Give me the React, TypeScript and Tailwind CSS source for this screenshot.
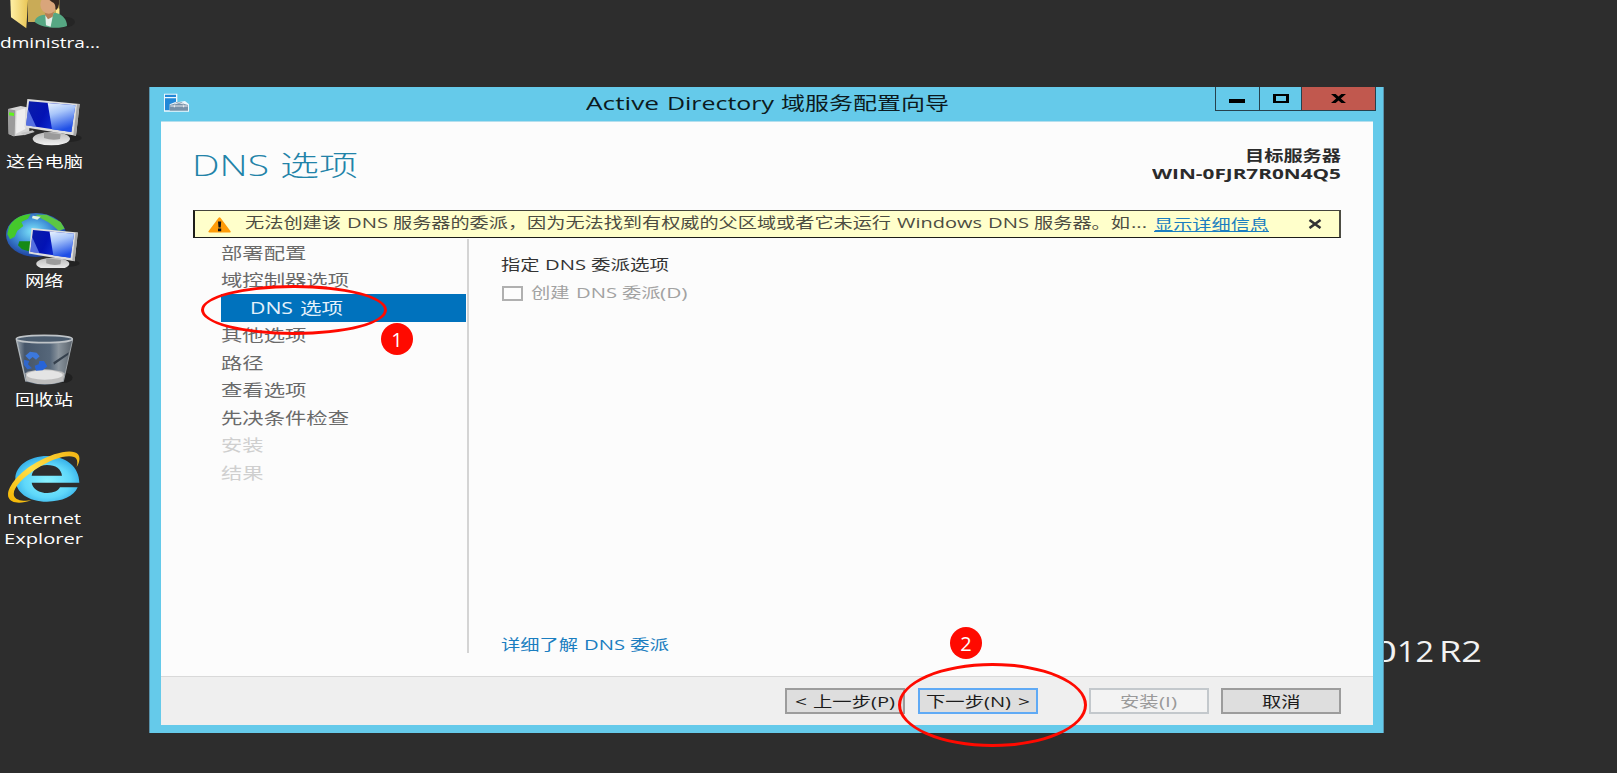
import { useLayoutEffect, useRef, useState } from "react";
import type { ReactNode } from "react";

type Segment = [text: string, width: number, gap?: number];

/** Text stretched horizontally so that it fills the given width. */
function Fit({ text, width, gap = 0 }: { text: string; width: number; gap?: number }) {
  const ref = useRef<HTMLSpanElement>(null);
  const [scale, setScale] = useState(1);
  useLayoutEffect(() => {
    if (ref.current) {
      const natural = parseFloat(getComputedStyle(ref.current).width);
      if (natural > 0) setScale(width / natural);
    }
  }, [text, width]);
  return (
    <span className="block shrink-0 whitespace-nowrap text-left" style={{ width, marginLeft: gap }}>
      <span ref={ref} className="inline-block origin-left" style={{ transform: `scaleX(${scale})` }}>
        {text}
      </span>
    </span>
  );
}

function Line({ parts, className = "" }: { parts: Segment[]; className?: string }) {
  return (
    <span className={`flex items-center ${className}`}>
      {parts.map(([text, width, gap], i) => (
        <Fit key={i} text={text} width={width} gap={gap} />
      ))}
    </span>
  );
}

function Monitor() {
  return (
    <>
      <defs>
        <linearGradient id="blueScreen" x1="0" y1="0" x2="1" y2="0.3">
          <stop offset="0" stopColor="#0a1fa8" />
          <stop offset="0.45" stopColor="#0312b4" />
          <stop offset="1" stopColor="#1740e8" />
        </linearGradient>
        <linearGradient id="glare" x1="0" y1="0" x2="0.3" y2="1">
          <stop offset="0" stopColor="#e8f2ff" />
          <stop offset="0.4" stopColor="#a9c6fa" />
          <stop offset="1" stopColor="#1f4fe6" />
        </linearGradient>
        <linearGradient id="silver" x1="0" y1="0" x2="0" y2="1">
          <stop offset="0" stopColor="#b9b9b9" />
          <stop offset="1" stopColor="#f2f2f2" />
        </linearGradient>
      </defs>
      <ellipse cx="205" cy="413" rx="40" ry="12" fill="#222" />
      <ellipse cx="154" cy="415" rx="56" ry="20" fill="url(#silver)" />
      <path d="M132 396 L182 402 L180 416 Q156 422 132 413Z" fill="#9b9b9b" />
      <path d="M82 296 L239 311 L228 406 L73 381Z" fill="#dedede" />
      <path d="M231 312 L239 311 L228 406 L220 404Z" fill="#a7a7a7" />
      <path d="M87 303 L226 315 L214 395 L78 375Z" fill="url(#blueScreen)" />
      <path d="M143 308 L226 315 L214 395 L156 387Z" fill="url(#glare)" />
      <path d="M84 326 L109 380 L78 375Z" fill="#6f8cf0" opacity=".75" />
    </>
  );
}

function AdminIcon() {
  return (
    <svg width="88" height="30" viewBox="0 0 264 90" className="shrink-0">
      <defs>
        <linearGradient id="folder" x1="0" y1="0" x2="1" y2="0">
          <stop offset="0" stopColor="#fff0a6" />
          <stop offset="1" stopColor="#e9c657" />
        </linearGradient>
      </defs>
      <ellipse cx="195" cy="66" rx="30" ry="16" fill="#252525" />
      <path d="M84 0H178V44L130 66L84 66Z" fill="#c9ab57" />
      <path d="M168 22L178 26V42H168Z" fill="#fbe58c" />
      <path d="M31 0H84L79 85L33 52Z" fill="url(#folder)" />
      <path d="M104 66C106 48 124 44 140 44L166 38C188 42 202 60 201 78C180 87 130 86 104 66Z" fill="#56a783" />
      <path d="M136 46L160 40L152 80L138 76Z" fill="#e5efe9" />
      <path d="M134 34H162L158 50L144 58L136 46Z" fill="#b67f55" />
      <ellipse cx="146" cy="14" rx="25" ry="27" fill="#d9a57b" />
      <path d="M146 -2H177V12Q172 34 166 28Q168 10 156 6Z" fill="#33261f" />
    </svg>
  );
}

function ComputerIcon() {
  return (
    <svg width="88" height="52" viewBox="0 284 264 156" className="shrink-0">
      <path d="M24 326L62 317L88 322V398L72 404L40 408L26 400Z" fill="#d5d5d5" />
      <path d="M24 326L46 330L44 408L26 402Z" fill="#9b9b9b" />
      <path d="M27 336L42 338V347L27 345Z" fill="#5ff51c" />
      <path d="M50 332L76 324V386L48 400Z" fill="#eee" />
      <path d="M62 398L98 390L104 395L72 405Z" fill="#c4c4c4" />
      <Monitor />
    </svg>
  );
}

function NetworkIcon() {
  return (
    <svg width="88" height="56" viewBox="0 634 264 168" className="shrink-0">
      <defs>
        <radialGradient id="globe" cx="0.45" cy="0.42" r="0.6">
          <stop offset="0" stopColor="#7fe6fb" />
          <stop offset="0.5" stopColor="#3f8ed6" />
          <stop offset="1" stopColor="#1c3a9a" />
        </radialGradient>
      </defs>
      <ellipse cx="108" cy="703" rx="90" ry="66" fill="url(#globe)" />
      <path d="M27 678C40 655 62 642 92 640L84 654L64 664L70 676L52 690L44 708L30 716L22 700Z" fill="#45c92c" />
      <path d="M106 642L140 642L182 664L194 684L176 690L160 676L144 664L128 656Z" fill="#5cc744" />
      <path d="M98 645L122 648L112 657L96 653Z" fill="#dff5e2" />
      <path d="M58 722L92 722L96 738L86 752L66 746L54 734Z" fill="#168a17" />
      <g transform="translate(22 414) scale(.885 .905)">
        <Monitor />
      </g>
    </svg>
  );
}

function RecycleIcon() {
  return (
    <svg width="88" height="54" viewBox="0 128 264 162" className="shrink-0">
      <defs>
        <linearGradient id="bin" x1="0" y1="0" x2="1" y2="0">
          <stop offset="0" stopColor="#9aa4ad" />
          <stop offset="0.15" stopColor="#46566a" />
          <stop offset="0.6" stopColor="#56677a" />
          <stop offset="0.75" stopColor="#8a949d" />
          <stop offset="1" stopColor="#59626b" />
        </linearGradient>
      </defs>
      <ellipse cx="188" cy="262" rx="30" ry="16" fill="#202020" />
      <path d="M49 148L218 148L190 274Q134 292 78 274Z" fill="url(#bin)" />
      <path d="M76 248Q134 226 194 248L190 273Q134 291 79 273Z" fill="#bdbdbd" />
      <ellipse cx="134" cy="254" rx="54" ry="14" fill="#e4e4e4" />
      <path d="M160 216L206 186L204 194L162 223Z" fill="#35404d" />
      <path d="M76 196L90 184L110 187L119 198L108 208L98 200L88 208Z" fill="#3c78dc" />
      <path d="M72 208L88 212L84 222L96 234L82 237L72 224Z" fill="#2f66cc" />
      <path d="M104 226L116 222L118 212L132 212L142 228L128 240L108 241Z" fill="#2764d8" />
      <path d="M49 148L78 274" stroke="#aeb5ba" strokeWidth="4" />
      <path d="M218 148L190 274" stroke="#9ba1a6" strokeWidth="3" />
      <ellipse cx="133" cy="146" rx="84" ry="11" fill="#4b5c6e" stroke="#bfc4c8" strokeWidth="5" />
    </svg>
  );
}

function ExplorerIcon() {
  return (
    <svg width="88" height="56" viewBox="0 476 264 168" className="shrink-0">
      <defs>
        <radialGradient id="ieBlue" cx="0.5" cy="0.55" r="0.6">
          <stop offset="0" stopColor="#8af2ff" />
          <stop offset="0.6" stopColor="#5fd8fa" />
          <stop offset="1" stopColor="#2ba4e2" />
        </radialGradient>
        <linearGradient id="ring" x1="0" y1="1" x2="1" y2="0">
          <stop offset="0" stopColor="#f4b400" />
          <stop offset="0.5" stopColor="#ffe14a" />
          <stop offset="1" stopColor="#f2b211" />
        </linearGradient>
      </defs>
      <path
        fillRule="evenodd"
        d="M141 497C198 497 238 530 238 577H95C98 596 117 608 143 608C160 608 174 602 180 591H233C222 618 186 634 141 634C85 634 46 606 46 565C46 526 88 497 141 497ZM95 556H186C183 536 168 524 141 524C116 524 99 536 95 556Z"
        fill="url(#ieBlue)"
      />
      <path
        d="M94 630C62 641 32 640 25 620C18 594 54 548 110 516C162 486 218 474 234 492C242 502 238 518 230 530C234 514 232 504 222 500C198 492 152 508 112 534C66 562 36 596 42 616C47 630 68 633 94 630Z"
        fill="url(#ring)"
      />
    </svg>
  );
}

function DesktopItem({ icon, labels, gap = "mt-[3px]" }: { icon: ReactNode; labels: Segment[]; gap?: string }) {
  return (
    <div className="flex w-[100px] flex-col">
      {icon}
      <div className={`flex flex-col text-[15px] leading-[19.5px] text-white ${gap}`}>
        {labels.map((label) => (
          <Line key={label[0]} parts={[label]} />
        ))}
      </div>
    </div>
  );
}

function ServerIcon() {
  return (
    <svg width="27" height="20" viewBox="0 0 81 60">
      <path d="M3 2H43V28L66 24L78 34V56H3Z" fill="#eef8fd" />
      <path d="M6 5H39V12H6ZM6 16H39V26L20 34V52H6Z" fill="#2188d8" />
      <path d="M20 36L32 33Q48 20 64 33L75 36V53H20Z" fill="#7791a8" />
      <path d="M34 33Q48 25 62 33M22 39H74M34 37V43M62 37V43" stroke="#fff" strokeWidth="2.5" fill="none" />
    </svg>
  );
}

function TitleBar() {
  return (
    <div className="flex h-[34px] shrink-0 items-start">
      <div className="ml-[13px] mt-[6px] w-[423px]">
        <ServerIcon />
      </div>
      <Line
        className="mt-[3px] text-[18px] leading-[27px] text-[#0c1a20]"
        parts={[
          ["Active", 73],
          ["Directory", 107, 8],
          ["域服务配置向导", 168, 6.5],
        ]}
      />
      <div className="ml-auto mr-[7px] flex h-[24px] border-x border-b border-[#26414d]">
        <div className="flex w-[44px] justify-center border-r border-[#26414d] pr-px pt-[12px]">
          <div className="h-[4px] w-[16px] bg-black" />
        </div>
        <div className="flex w-[42px] justify-center border-r border-[#26414d] pt-[7px]">
          <div className="h-[9px] w-[16px] border-x-[3px] border-y-2 border-black" />
        </div>
        <div className="flex w-[73px] justify-center bg-[#c1584e] pt-[7px]">
          <svg width="15" height="9" viewBox="0 0 15 9">
            <path d="M0 0H4.6L7.5 2.6L10.4 0H15L9.8 4.5L15 9H10.4L7.5 6.4L4.6 9H0L5.2 4.5Z" />
          </svg>
        </div>
      </div>
    </div>
  );
}

function WarningBar() {
  return (
    <div className="flex h-[28px] shrink-0 items-start border border-b-[#1d1d1a] border-l-2 border-l-[#1d1d1a] border-r-2 border-r-[#4d4d44] border-t-[#44443c] bg-[#ffffcb]">
      <svg width="23" height="16" viewBox="0 0 23 16" className="ml-[13px] mt-[6px]">
        <path d="M10.4 1Q11.5 -.4 12.6 1L22.6 14.2Q23 15.6 21.4 15.6H1.6Q0 15.6 .5 14.2Z" fill="#ff9c08" />
        <path d="M10 4.6H13.2L12.7 10.4H10.5ZM10 11.6H13.2V14.2H10Z" fill="#111" />
      </svg>
      <Line
        className="ml-[14px] mt-px text-[14.5px] leading-[21px] text-[#4c4c42]"
        parts={[
          ["无法创建该", 96],
          ["DNS", 41, 6],
          ["服务器的委派，因为无法找到有权威的父区域或者它未运行", 498, 5],
          ["Windows", 85, 6],
          ["DNS", 41, 6],
          ["服务器。如", 96, 5],
          ["...", 16, 1],
        ]}
      />
      <Line
        className="ml-[7px] mt-[3px] text-[14.5px] leading-[21px] text-[#1a7ec0] [&_span]:underline [&_span]:decoration-1 [&_span]:underline-offset-1"
        parts={[["显示详细信息", 115]]}
      />
      <svg width="14" height="10" viewBox="0 0 14 10" className="ml-[39px] mt-[8px]">
        <path d="M1.5 1L12.5 9M12.5 1L1.5 9" stroke="#333" strokeWidth="2.6" />
      </svg>
    </div>
  );
}

const steps: { parts: Segment[]; tone: string }[] = [
  { parts: [["部署配置", 85.5]], tone: "text-[#6a6a6a]" },
  { parts: [["域控制器选项", 128]], tone: "text-[#6a6a6a]" },
  { parts: [["DNS", 43], ["选项", 43, 6.5]], tone: "bg-[#0072bd] pl-[29px] text-[#e4f1fa]" },
  { parts: [["其他选项", 85.5]], tone: "text-[#6a6a6a]" },
  { parts: [["路径", 42.5]], tone: "text-[#6a6a6a]" },
  { parts: [["查看选项", 85.5]], tone: "text-[#6a6a6a]" },
  { parts: [["先决条件检查", 128]], tone: "text-[#6a6a6a]" },
  { parts: [["安装", 42.5]], tone: "text-[#cfcfcf]" },
  { parts: [["结果", 42.5]], tone: "text-[#cfcfcf]" },
];

function Button({ parts, tone }: { parts: Segment[]; tone: string }) {
  return (
    <button
      className={`flex h-[26px] w-[120px] items-center justify-center border-2 text-[14.5px] leading-[20px] ${tone}`}
    >
      <Line className="mt-px" parts={parts} />
    </button>
  );
}

function Wizard() {
  return (
    <div className="absolute left-[149px] top-[87px] flex h-[646px] w-[1235px] flex-col border-l border-r border-l-[#5792ab] border-r-[#5792ab] bg-[#65caea]">
      <TitleBar />
      <div className="mb-[8px] ml-[11px] mr-[10px] flex flex-1 flex-col border-t border-[#b4dfee] bg-[#fcfcfc]">
        <div className="flex h-[88px] shrink-0 justify-between pl-[31px] pr-[32px]">
          <Line
            className="mt-[23px] h-[40px] text-[28.5px] font-light leading-[40px] text-[#2283a8]"
            parts={[
              ["DNS", 77],
              ["选项", 78, 11],
            ]}
          />
          <div className="mt-[25px] flex flex-col items-end text-[14.5px] font-bold leading-[17.5px] text-[#2b2b2b]">
            <Line parts={[["目标服务器", 96]]} />
            <Line parts={[["WIN-0FJR7R0N4Q5", 189]]} />
          </div>
        </div>
        <div className="flex flex-col pl-[32px] pr-[32px]">
          <WarningBar />
        </div>
        <div className="flex h-[415px] pl-[60px] pt-px">
          <div className="flex w-[244.5px] flex-col text-[16.3px] leading-[24px]">
            {steps.map((step, i) => (
              <div key={i} className={`flex h-[27.5px] shrink-0 items-center ${step.tone}`}>
                <Line parts={step.parts} />
              </div>
            ))}
          </div>
          <div className="ml-px w-[2px] bg-[#d4d4d4]" />
          <div className="ml-[32px] flex flex-1 flex-col text-[14.5px] leading-[20px]">
            <Line
              className="mt-[16px] text-[#333]"
              parts={[
                ["指定", 38.5],
                ["DNS", 41, 6],
                ["委派选项", 78, 5],
              ]}
            />
            <div className="mt-[8px] flex items-center">
              <div className="ml-[1.5px] mt-px h-[15px] w-[21px] border-2 border-[#b0b0b0] bg-[#fdfdfd]" />
              <Line
                className="ml-[8px] text-[#a2a2a2]"
                parts={[
                  ["创建", 38.5],
                  ["DNS", 41, 6],
                  ["委派", 38.5, 5],
                  ["(D)", 27.5],
                ]}
              />
            </div>
            <Line
              className="mb-[-2px] mt-auto text-[#1a7ec0]"
              parts={[
                ["详细了解", 77],
                ["DNS", 41, 6],
                ["委派", 39, 5.5],
              ]}
            />
          </div>
        </div>
        <div className="mt-auto flex h-[49px] shrink-0 items-start justify-end border-t border-[#d9d9d9] bg-[#efefef] pr-[32px] pt-[11px]">
          <Button
            tone="border-[#9c9c9c] bg-[#dedede] text-[#1c1c1c]"
            parts={[["<", 12], ["上一步", 58, 6], ["(P)", 24]]}
          />
          <div className="w-[12.5px]" />
          <Button
            tone="border-[#5faaf5] bg-[#dedede] text-[#1c1c1c]"
            parts={[["下一步", 58], ["(N)", 27], [">", 12, 7]]}
          />
          <div className="w-[51px]" />
          <Button
            tone="border-[#c3c8cc] bg-[#f3f3f3] text-[#9a9a9a]"
            parts={[["安装", 38.5], ["(I)", 18]]}
          />
          <div className="w-[12.5px]" />
          <Button tone="border-[#9c9c9c] bg-[#dedede] text-[#1c1c1c]" parts={[["取消", 38.5]]} />
        </div>
      </div>
    </div>
  );
}

function Annotations() {
  return (
    <>
      <div className="absolute left-[200.5px] top-[284.5px] h-[50.5px] w-[186.5px] rounded-[50%] border-3 border-[#ff0a00]" />
      <div className="absolute left-[898px] top-[663px] h-[84px] w-[189px] rounded-[50%] border-3 border-[#ff0a00]" />
      <div className="absolute left-[381px] top-[323px] flex size-[32px] items-center justify-center rounded-full bg-[#ff0a00] pt-px text-[20px] leading-none text-white">
        1
      </div>
      <div className="absolute left-[950px] top-[627px] flex size-[32px] items-center justify-center rounded-full bg-[#ff0a00] pt-px text-[20px] leading-none text-white">
        2
      </div>
    </>
  );
}

export default function App() {
  return (
    <div className="relative h-[773px] w-[1617px] overflow-hidden bg-[#2d2d2d] font-['Open_Sans','Noto_Sans_CJK_SC',sans-serif]">
      <div className="flex flex-col">
        <div className="h-[95px]">
          <DesktopItem icon={<AdminIcon />} labels={[["dministra...", 100]]} />
        </div>
        <div className="h-[117px]">
          <DesktopItem icon={<ComputerIcon />} labels={[["这台电脑", 77, 5.5]]} gap="mt-[5px]" />
        </div>
        <div className="h-[121px]">
          <DesktopItem icon={<NetworkIcon />} labels={[["网络", 38.5, 24.5]]} />
        </div>
        <div className="h-[116px]">
          <DesktopItem icon={<RecycleIcon />} labels={[["回收站", 58, 15]]} />
        </div>
        <DesktopItem
          icon={<ExplorerIcon />}
          gap="mt-[4px]"
          labels={[
            ["Internet", 74, 6.5],
            ["Explorer", 79, 4],
          ]}
        />
      </div>
      <Line
        className="absolute left-[1374px] top-[631px] text-[29px] leading-[40px] text-[#f2f2f2]"
        parts={[
          ["0", 23],
          ["12", 37],
          ["R2", 43, 5],
        ]}
      />
      <Wizard />
      <Annotations />
    </div>
  );
}
